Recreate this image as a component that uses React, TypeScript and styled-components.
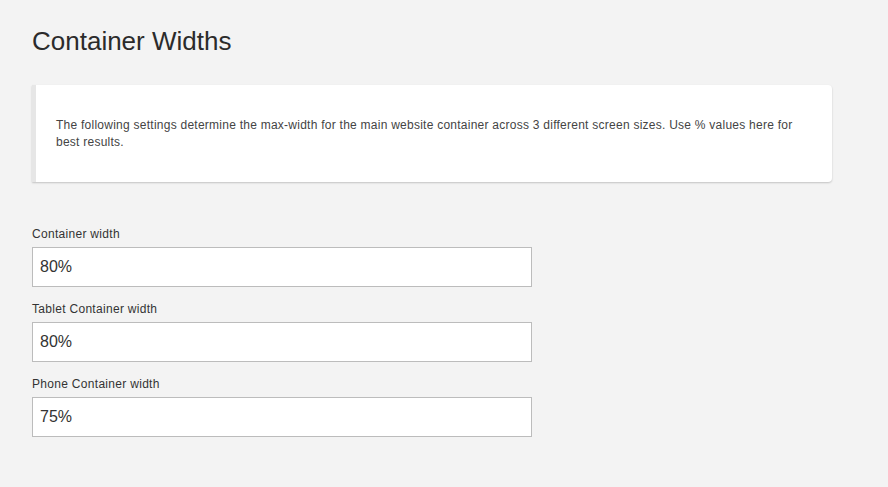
import styled, { createGlobalStyle } from "styled-components";

const GlobalStyle = createGlobalStyle`
  html, body {
    margin: 0;
    padding: 0;
    background: #f3f3f3;
  }
  body {
    font-family: "Liberation Sans", Arial, Helvetica, sans-serif;
    color: #333;
  }
`;

const Page = styled.div`
  padding: 24px 32px 40px 32px;
  min-height: 487px;
  box-sizing: border-box;
`;

const Title = styled.h1`
  margin: 0;
  font-size: 26px;
  font-weight: 400;
  line-height: 34px;
  color: #2b2b2b;
`;

const Notice = styled.div`
  margin-top: 27px;
  width: 800px;
  box-sizing: border-box;
  background: #fff;
  border-left: 4px solid #e6e6e6;
  border-radius: 0 4px 4px 0;
  box-shadow: 0 1px 2px rgba(0, 0, 0, 0.2);
  padding: 32px 24px 30px 20px;
  font-size: 12px;
  line-height: 17px;
  letter-spacing: 0.25px;
  color: #444;
  height: 97px;
`;

const Fields = styled.div`
  margin-top: 44px;
  display: flex;
  flex-direction: column;
  gap: 14px;
`;

const Field = styled.label`
  display: flex;
  flex-direction: column;
  gap: 5px;
`;

const Label = styled.span`
  font-size: 12px;
  line-height: 16px;
  letter-spacing: 0.3px;
  color: #333;
`;

const Input = styled.input`
  width: 500px;
  height: 40px;
  box-sizing: border-box;
  border: 1px solid #bcbcbc;
  background: #fff;
  padding: 0 7px;
  font-family: "Liberation Sans", Arial, Helvetica, sans-serif;
  font-size: 16px;
  color: #333;
  outline: none;
`;

const fields = [
  { label: "Container width", value: "80%" },
  { label: "Tablet Container width", value: "80%" },
  { label: "Phone Container width", value: "75%" },
];

export default function App() {
  return (
    <>
      <GlobalStyle />
      <Page>
        <Title>Container Widths</Title>
        <Notice>
          The following settings determine the max-width for the main website
          container across 3 different screen sizes. Use % values here for best
          results.
        </Notice>
        <Fields>
          {fields.map((f) => (
            <Field key={f.label}>
              <Label>{f.label}</Label>
              <Input type="text" defaultValue={f.value} />
            </Field>
          ))}
        </Fields>
      </Page>
    </>
  );
}
